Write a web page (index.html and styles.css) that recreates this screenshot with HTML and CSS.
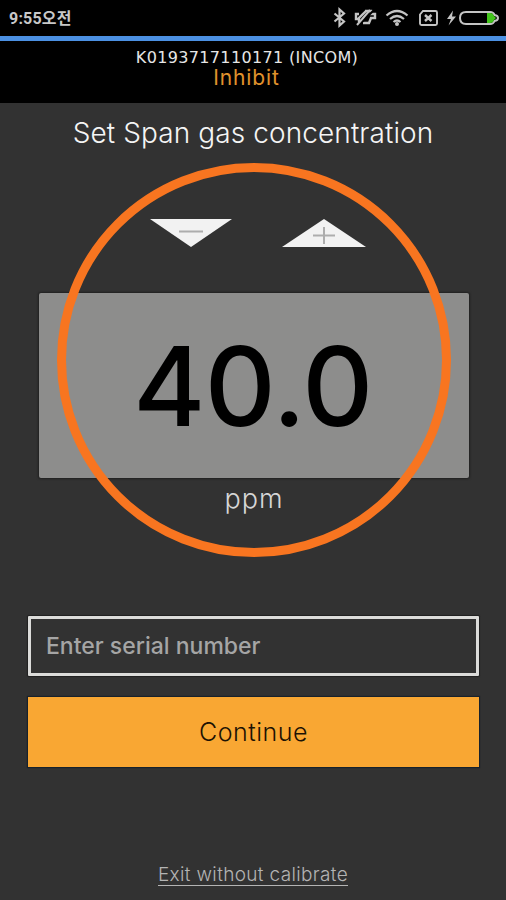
FILE: index.html
```
<!DOCTYPE html>
<html lang="ko">

<head>
    <meta charset="UTF-8">
    <meta name="viewport" content="width=device-width, initial-scale=1.0">
    <title>Set Span gas concentration</title>
    <link rel="stylesheet" href="styles.css">
</head>

<body>
    <div class="wrap">
        <div class="status">
            <span class="time">9:55오전</span>
            <svg class="icons" width="170" height="24" viewBox="0 0 170 24" fill="none" stroke="#c4c4c4" stroke-width="2">
                <!-- bluetooth -->
                <path d="M2.500 7.500L12 15.500L7.500 19.500V3.500L12 7.500L2.500 15.500" stroke-width="2.200" />
                <!-- vibrate off -->
                <path d="M33 5H39V8H43V12H39L37 17H31M34 5L27 12V16M27 8H24V13H27" stroke-width="2.400" />
                <path d="M28 18L41 5" stroke="#000" stroke-width="2" />
                <path d="M25 19L38 4" stroke-width="2" />
                <!-- wifi -->
                <path d="M54.500 9.500Q65 0.500 75.500 9.500M58 13Q65 7 72 13M61.500 16Q65 13 68.500 16" stroke-width="2.200" />
                <circle cx="65" cy="18" r="2" fill="#c4c4c4" stroke="none" />
                <!-- no sim -->
                <path d="M91 5H103.500Q105 5 105 6.500V17.500Q105 19 103.500 19H89.500Q88 19 88 17.500V8.500Z" stroke-width="1.900" />
                <path d="M93 9L99.500 15M99.500 9L93 15" stroke-width="2.400" />
                <!-- charging -->
                <path d="M121 4.500L115 13H119L116.500 19.500L124 10.500H120Z" fill="#c4c4c4" stroke="none" />
                <!-- battery -->
                <path d="M134 6H158Q161.500 6 162.500 9Q166 9.500 166 12Q166 14.500 162.500 15Q161.500 18 158 18H134Q128 18 128 12Q128 6 134 6Z" />
                <path d="M155 7H158Q161 7 162 10L164 12L162 14Q161 17 158 17H155Z" fill="#43c51c" stroke="none" />
            </svg>
        </div>
        <div class="header">
            <p class="device">K0193717110171 (INCOM)</p>
            <p class="state">Inhibit</p>
        </div>
        <h1 class="title">Set Span gas concentration</h1>
        <div class="dial">
            <div class="arrows">
                <svg width="84" height="30" viewBox="0 0 84 30">
                    <path d="M1 1H83L42 29Z" fill="#f2f2f2" />
                    <path d="M30 13.500H54" stroke="#adadad" stroke-width="2" />
                </svg>
                <svg width="86" height="30" viewBox="0 0 86 30">
                    <path d="M1 29H85L43 1Z" fill="#f2f2f2" />
                    <path d="M32 17.500H54M43 9V26" stroke="#adadad" stroke-width="2" />
                </svg>
            </div>
            <div class="panel"><span class="value">40.0</span></div>
            <p class="unit">ppm</p>
            <div class="ring"></div>
        </div>
        <form class="form" action="">
            <input class="serial" type="text" placeholder="Enter serial number">
            <button class="continue" type="button">Continue</button>
        </form>
        <a class="exit">Exit without calibrate</a>
    </div>
</body>

</html>
```
FILE: styles.css
```
* {
    margin: 0;
    padding: 0;
    box-sizing: border-box;
}

body {
    background: #323232;
    font-family: Inter, "Noto Sans CJK KR", sans-serif;
}

.wrap {
    display: flex;
    flex-direction: column;
    width: 506px;
    height: 900px;
    overflow: hidden;
    white-space: nowrap;
}

.status {
    display: flex;
    justify-content: space-between;
    height: 41px;
    padding: 6px 4px 0 9px;
    background: #000;
    border-bottom: 5px solid #4b90e2;
}

.time {
    font-family: Roboto, "Noto Sans CJK KR", sans-serif;
    font-size: 16px;
    font-weight: bold;
    line-height: 25px;
    letter-spacing: 0.2px;
    color: #c8c8c8;
}

.header {
    height: 62px;
    padding-top: 7px;
    background: #000;
    text-align: center;
}

.device {
    padding-right: 12px;
    font-family: "DejaVu Sans", sans-serif;
    font-size: 16px;
    line-height: 19px;
    letter-spacing: 0.35px;
    color: #e6e6e6;
}

.state {
    padding-right: 13px;
    font-size: 21px;
    line-height: 22px;
    letter-spacing: 0.9px;
    color: #e0922c;
}

.title {
    height: 60px;
    padding-top: 12px;
    font-size: 28px;
    font-weight: 300;
    line-height: 36px;
    letter-spacing: 0.1px;
    text-align: center;
    color: #f5f5f5;
}

.dial {
    position: relative;
    height: 394px;
    padding: 55px 37px 0 39px;
}

.arrows {
    display: flex;
    justify-content: center;
    gap: 48px;
    height: 75px;
    padding-left: 8px;
}

.panel {
    display: flex;
    align-items: center;
    justify-content: center;
    height: 185px;
    padding-right: 2px;
    background: #8d8d8c;
    border-radius: 2px;
    box-shadow: 0 0 2px 1px #202020;
}

.value {
    font-size: 110px;
    font-weight: 500;
    line-height: 120px;
    letter-spacing: -0.5px;
    color: #000;
}

.unit {
    padding-top: 4px;
    font-size: 27px;
    font-weight: 300;
    line-height: 34px;
    letter-spacing: 1px;
    text-align: center;
    color: #d6d6d6;
}

/* ring lies over the value panel */
.ring {
    position: absolute;
    top: 0;
    left: 57px;
    width: 394px;
    height: 394px;
    border: 9px solid #f87520;
    border-radius: 50%;
}

.form {
    display: flex;
    flex-direction: column;
    gap: 21px;
    padding: 59px 27px 0 28px;
}

.serial {
    height: 60px;
    padding: 0 15px;
    font-family: inherit;
    font-size: 23px;
    font-weight: 500;
    color: #a5a5a5;
    background: #323232;
    border: 3px solid #dcdcda;
    border-radius: 1px;
    box-shadow: 0 0 1px 1px #202020;
}

.serial::placeholder {
    color: #a5a5a5;
}

.continue {
    height: 70px;
    font-family: inherit;
    font-size: 25px;
    font-weight: 300;
    letter-spacing: 0.5px;
    color: #1c1204;
    background: #f9a733;
    border: none;
    box-shadow: 0 0 1px 1px #18222c;
}

.exit {
    align-self: center;
    margin-top: 97px;
    font-size: 19px;
    font-weight: 300;
    line-height: 21px;
    letter-spacing: 0.35px;
    color: #b4b4b4;
    border-bottom: 1px solid #b4b4b4;
}
```
